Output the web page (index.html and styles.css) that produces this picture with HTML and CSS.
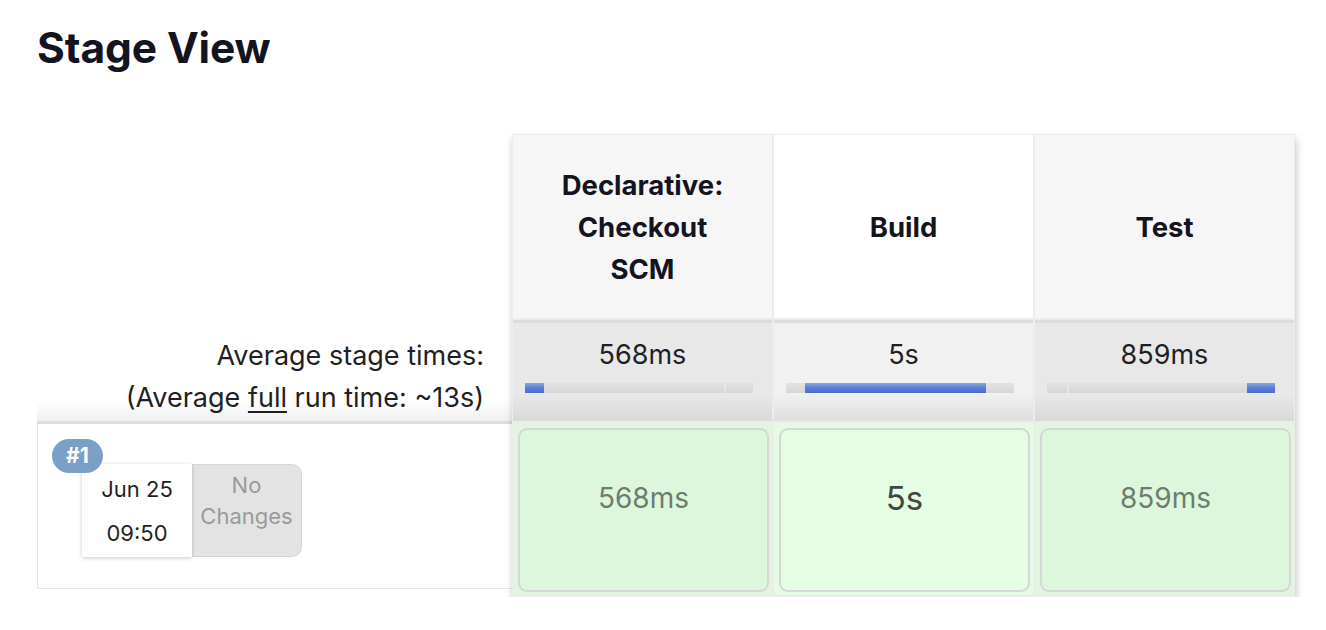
FILE: index.html
```html
<!DOCTYPE html>
<html>
<head>
<meta charset="utf-8">
<link rel="stylesheet" href="styles.css">
</head>
<body>
<div class="page">
  <h1 class="title">Stage View</h1>
  <div class="stage-view">
    <div class="labels">
      <div class="labels-head"></div>
      <div class="labels-avg">
        <div>Average stage times:</div>
        <div>(Average <span class="u">full</span> run time: ~13s)</div>
      </div>
      <div class="run">
        <div class="run-info">
          <span class="badge">#1</span>
          <div class="date">Jun 25<br>09:50</div>
          <div class="changes">No<br>Changes</div>
        </div>
      </div>
    </div>
    <div class="stages">
      <div class="head odd"><span>Declarative: Checkout SCM</span></div>
      <div class="head even"><span>Build</span></div>
      <div class="head odd"><span>Test</span></div>

      <div class="avg odd">
        <div class="avg-time">568ms</div>
        <div class="bar"><span class="tick" style="left:199px"></span><span class="fill" style="left:0;width:19px"></span></div>
      </div>
      <div class="avg even">
        <div class="avg-time">5s</div>
        <div class="bar"><span class="fill" style="left:19px;width:181px"></span></div>
      </div>
      <div class="avg odd">
        <div class="avg-time">859ms</div>
        <div class="bar"><span class="tick" style="left:20px"></span><span class="fill" style="left:200px;width:28px"></span></div>
      </div>

      <div class="cell odd"><div class="box">568ms</div></div>
      <div class="cell even"><div class="box big">5s</div></div>
      <div class="cell odd"><div class="box">859ms</div></div>
    </div>
  </div>
</div>
</body>
</html>
```

FILE: styles.css
```css
html, body {
  margin: 0;
  padding: 0;
  background: #fff;
}
body {
  font-family: Inter, "Noto Sans", "Liberation Sans", sans-serif;
  color: #14141f;
}
.page {
  padding: 23px 0 0 37px;
}
.title {
  margin: 0;
  font-size: 42.5px;
  line-height: 50px;
  font-weight: 700;
  letter-spacing: -0.1px;
  color: #14141f;
}
.stage-view {
  display: flex;
  margin-top: 61px;
  align-items: flex-start;
}
.labels {
  width: 475px;
  display: flex;
  flex-direction: column;
}
.labels-head {
  height: 185px;
}
.labels-avg {
  padding: 16px 28px 2px 0;
  text-align: right;
  font-size: 27px;
  line-height: 42px;
  color: #1f1f24;
  border-bottom: 3px solid #dedede;
  background: linear-gradient(to bottom, #fff 0%, #fff 80%, #f0f0f0 100%);
}
.u {
  text-decoration: underline;
  text-underline-offset: 4px;
  text-decoration-thickness: 1.5px;
}
.run {
  border-left: 1px solid #e3e3e3;
  border-bottom: 1px solid #e8e8e8;
  padding: 40px 0 0 44px;
  box-sizing: border-box;
  height: 165px;
}
.run-info {
  position: relative;
  display: flex;
}
.badge {
  position: absolute;
  left: -30px;
  top: -25px;
  background: #7ba0c8;
  color: #fff;
  font-weight: 700;
  font-size: 21px;
  line-height: 34px;
  height: 34px;
  padding: 0 14px;
  border-radius: 17px;
  z-index: 2;
}
.date {
  width: 110px;
  height: 93px;
  box-sizing: border-box;
  padding-top: 3px;
  background: #fff;
  text-align: center;
  font-size: 22px;
  line-height: 44px;
  color: #1f1f24;
  box-shadow: 0 1px 4px rgba(0, 0, 0, 0.22);
  position: relative;
  z-index: 1;
}
.changes {
  width: 110px;
  height: 93px;
  box-sizing: border-box;
  padding-top: 5px;
  background: #e3e3e3;
  border: 1px solid #d6d6d6;
  border-left: none;
  border-radius: 0 10px 10px 0;
  text-align: center;
  font-size: 22px;
  line-height: 31px;
  color: #9a9a9a;
}
.stages {
  display: grid;
  grid-template-columns: repeat(3, 259px);
  grid-template-rows: 183px 101px 172px;
  gap: 2px;
  padding: 1px 1px 2px;
  background: #ececec;
  box-shadow: 1px 5px 8px rgba(0, 0, 0, 0.24);
}
.head {
  display: flex;
  align-items: center;
  justify-content: center;
  padding: 0 36px;
  text-align: center;
  font-size: 27.5px;
  line-height: 42px;
  font-weight: 700;
  color: #14141f;
}
.head.odd { background: #f6f6f6; }
.head.even { background: #fff; }
.avg {
  box-sizing: border-box;
  border-top: 3px solid #dcdcdc;
  padding-top: 11px;
}
.avg.odd {
  background: linear-gradient(to bottom, #e8e8e8 0%, #e8e8e8 72%, #d9d9d9 100%);
}
.avg.even {
  background: linear-gradient(to bottom, #f1f1f1 0%, #f1f1f1 72%, #dedede 100%);
}
.avg-time {
  text-align: center;
  font-size: 27px;
  line-height: 42px;
  color: #1f1f24;
}
.bar {
  position: relative;
  margin: 7px 0 0 12px;
  width: 228px;
  height: 10px;
  background: linear-gradient(to bottom, #e2e2e2, #d6d6d6);
}
.tick {
  position: absolute;
  top: 0;
  width: 2px;
  height: 10px;
  background: #e6e6e6;
}
.fill {
  position: absolute;
  top: 0;
  height: 10px;
  background: linear-gradient(to bottom, #8aa6e2 0%, #5d80d6 45%, #4a6dcc 100%);
}
.cell {
  display: flex;
  padding: 5px 3px 3px 5px;
}
.cell.odd { background: #e2f5df; }
.cell.even { background: #e6fbe4; }
.box {
  flex: 1;
  box-sizing: border-box;
  border: 2px solid #d6d6d6;
  border-radius: 9px;
  text-align: center;
  padding-top: 48px;
  font-size: 28px;
  line-height: 40px;
  color: #6e7d6e;
}
.cell.odd .box { background: #ddf7dc; }
.cell.even .box { background: #e4fde3; }
.box.big {
  font-size: 33px;
  color: #444;
}
```
